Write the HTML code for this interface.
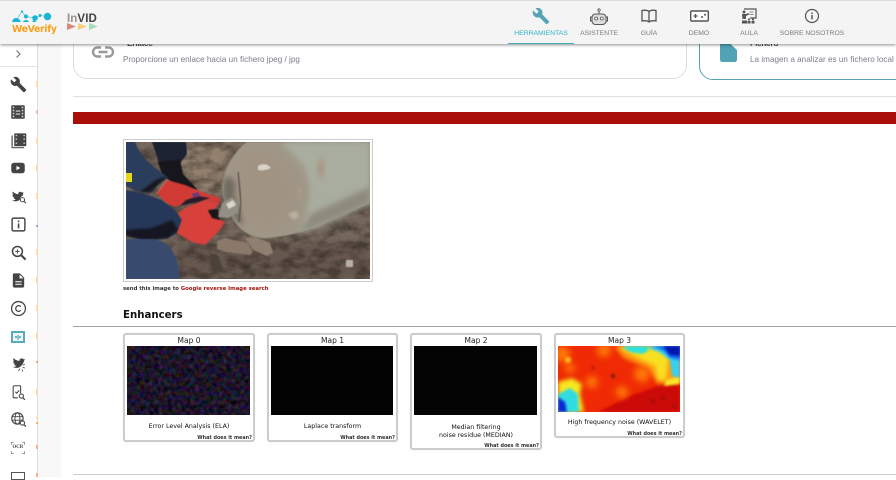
<!DOCTYPE html>
<html><head><meta charset="utf-8"><style>
html,body{margin:0;padding:0;background:#fff}
body{width:896px;height:477px;position:relative;overflow:hidden;font-family:"Liberation Sans",sans-serif}
.a{position:absolute}
.t{position:absolute;white-space:nowrap}
.nav{position:absolute;top:30px;font-size:6.8px;color:#7a7a7a;text-align:center;transform:translateX(-50%);white-space:nowrap}
.card{position:absolute;box-sizing:border-box;border:2px solid #ccc;border-radius:3px;background:#fff;box-shadow:0 0 1px #ddd}
.mt{position:absolute;left:0;right:0;top:1px;text-align:center;font:7.5px "DejaVu Sans",sans-serif;color:#222}
.cap{position:absolute;left:0;right:0;text-align:center;font:6.3px/8.5px "DejaVu Sans",sans-serif;color:#111}
.wm{position:absolute;right:1px;font:bold 4.900px "DejaVu Sans",sans-serif;color:#333;white-space:nowrap}
.ic{position:absolute;left:9.500px;width:17px;height:17px}
.o{position:absolute;left:36px;width:1.500px;height:6px;background:#fbd9a8}
.sub{font-size:8.100px;line-height:1;color:#7d7a86;letter-spacing:.03px}
</style></head><body>

<!-- sidebar -->
<div class="a" style="left:38px;top:44px;width:23px;height:433px;background:#f8f8f8"></div>
<div class="a" style="left:37px;top:44px;width:1px;height:433px;background:#ddd"></div>
<div class="a" style="left:0;top:66px;width:37px;height:1px;background:#e2e2e2"></div>
<svg class="a" style="left:13px;top:49px" width="10" height="10" viewBox="0 0 10 10"><path d="M3.500 1.500 7 5 3.500 8.500" fill="none" stroke="#777" stroke-width="1.200"/></svg>

<svg class="ic" style="top:76px" viewBox="0 0 24 24"><path fill="#444" d="M22.700 19l-9.100-9.100c.9-2.300.4-5-1.500-6.900-2-2-5-2.400-7.400-1.300L9 6 6 9 1.600 4.700C.4 7.100.9 10.100 2.900 12.100c1.900 1.900 4.600 2.400 6.900 1.500l9.100 9.100c.4.400 1 .4 1.400 0l2.300-2.300c.5-.4.500-1.100.1-1.400z"/></svg>
<svg class="ic" style="top:103px;left:9px;width:18px;height:18px" viewBox="0 0 24 24"><rect x="3" y="3" width="18" height="18" rx="1" fill="#444"/><g fill="#ddd"><rect x="5" y="5" width="2" height="2"/><rect x="5" y="9" width="2" height="2"/><rect x="5" y="13" width="2" height="2"/><rect x="5" y="17" width="2" height="2"/><rect x="17" y="5" width="2" height="2"/><rect x="17" y="9" width="2" height="2"/><rect x="17" y="13" width="2" height="2"/><rect x="17" y="17" width="2" height="2"/><rect x="9" y="10" width="6" height="1.500"/><rect x="9" y="14" width="6" height="1.500"/></g></svg>
<svg class="ic" style="top:132px" viewBox="0 0 24 24"><path fill="#666" d="M2 5h2v16h16v2H2z"/><rect x="6" y="2" width="17" height="18" rx="1" fill="#444"/><g fill="#ccc"><rect x="8" y="4" width="2" height="2"/><rect x="8" y="9" width="2" height="2"/><rect x="8" y="15" width="2" height="2"/><rect x="19" y="4" width="2" height="2"/><rect x="19" y="9" width="2" height="2"/><rect x="19" y="15" width="2" height="2"/></g></svg>
<svg class="ic" style="top:159px;left:9px;width:18px;height:18px" viewBox="0 0 24 24"><rect x="3" y="5" width="18" height="14" rx="3.500" fill="#444"/><path d="M10 9v6l5-3z" fill="#fff"/></svg>
<svg class="ic" style="top:187.500px" viewBox="0 0 24 24"><path fill="#444" d="M19 6c-.8.400-1.500.5-2 .5-1-1.200-2.500-1.500-3.800-.8-1.200.7-1.700 1.900-1.500 3.100C8.500 8.700 6 7.200 4 5c-1 1.800-.5 3.700 1 5-.6 0-1.200-.1-1.700-.4 0 1.900 1.300 3.300 3 3.800-.5.100-1 .1-1.500 0 .5 1.500 1.800 2.400 3.400 2.500C7 17 5 17.500 3 17.300c4 2.500 9 1.700 11-1 .5-3 1.500-4.500 3.500-5 .5-1 1-2 1.500-5.300z"/><circle cx="17.500" cy="16.500" r="3" fill="none" stroke="#444" stroke-width="1.400"/><path d="M19.700 18.700 22.500 21.500" stroke="#444" stroke-width="1.500"/></svg>
<svg class="ic" style="top:215.500px" viewBox="0 0 24 24"><rect x="3" y="3" width="18" height="18" rx="2" fill="none" stroke="#444" stroke-width="2"/><rect x="11" y="6.500" width="2.200" height="2.200" fill="#444"/><rect x="11" y="10.500" width="2.200" height="7" fill="#444"/></svg>
<svg class="ic" style="top:243.500px" viewBox="0 0 24 24"><circle cx="10.500" cy="10.500" r="7" fill="none" stroke="#444" stroke-width="2.200"/><path d="M15.500 15.500 22 22" stroke="#444" stroke-width="3"/><path d="M7.500 10.500h6M10.500 7.500v6" stroke="#555" stroke-width="1.500"/></svg>
<svg class="ic" style="top:271.500px" viewBox="0 0 24 24"><path fill="#444" d="M6 2h8l6 6v12c0 1.100-.9 2-2 2H6c-1.100 0-2-.9-2-2V4c0-1.100.9-2 2-2z"/><path fill="#fff" d="M13.500 3.500V9H19zM7.500 13h9v1.500h-9zM7.500 16.500h9v1.500h-9z"/></svg>
<svg class="ic" style="top:299.500px" viewBox="0 0 24 24"><circle cx="12" cy="12" r="9.800" fill="none" stroke="#444" stroke-width="1.800"/><path d="M15.200 9.500a4 4 0 1 0 0 5" fill="none" stroke="#444" stroke-width="1.800"/></svg>
<div class="a" style="left:11px;top:331px;width:14px;height:12px;box-sizing:border-box;border:2px solid #5aaab9;background:#eef6f8"></div>
<div class="a" style="left:15px;top:336px;width:6px;height:2px;background:#6fb4c4"></div>
<div class="a" style="left:17px;top:334.500px;width:2px;height:5px;background:#8cc4d0"></div>
<svg class="ic" style="top:355.500px" viewBox="0 0 24 24"><path fill="#444" d="M21 4c-.8.400-1.500.5-2 .5-1-1.200-2.800-1.500-4-.8-1.200.7-1.800 1.900-1.600 3.100C9.500 6.700 7 5.200 5 3c-1 1.800-.5 3.700 1 5-.6 0-1.200-.1-1.700-.4 0 1.900 1.300 3.300 3 3.800-.5.100-1 .1-1.500 0 .5 1.500 1.800 2.400 3.400 2.500C8 15 6 15.500 4 15.300c6 3.500 12 .7 15-6 .5-1 1-3 2-5.300z"/><path d="M14 18l-2 3M18 16l3 1M18 13l3-1M17 19l1 3" stroke="#555" stroke-width="1.300"/></svg>
<svg class="ic" style="top:383.500px" viewBox="0 0 24 24"><path d="M15 13V3.500a1 1 0 0 0-1-1H6.500a2 2 0 0 0-2 2V18a1.500 1.500 0 0 0 1.500 1.500h5" fill="none" stroke="#444" stroke-width="1.500"/><path d="M7.500 11l2 2 3.500-4" fill="none" stroke="#444" stroke-width="1.500"/><circle cx="16" cy="17" r="3" fill="none" stroke="#444" stroke-width="1.500"/><path d="M18 19.300 21 22.300" stroke="#444" stroke-width="1.700"/></svg>
<svg class="ic" style="top:410.500px" viewBox="0 0 24 24"><circle cx="10.500" cy="10.500" r="8" fill="none" stroke="#444" stroke-width="1.600"/><ellipse cx="10.500" cy="10.500" rx="3.500" ry="8" fill="none" stroke="#444" stroke-width="1.300"/><path d="M2.500 8h16M2.500 13h16" stroke="#444" stroke-width="1.300"/><circle cx="17.500" cy="17" r="3" fill="#fff" stroke="#444" stroke-width="1.500"/><path d="M19.700 19.200 22.500 22" stroke="#444" stroke-width="1.700"/></svg>
<svg class="a" style="left:11px;top:442px" width="14" height="12" viewBox="0 0 14 12"><path d="M0 3V0h3M11 0h3v3M14 9v3h-3M3 12H0V9" fill="none" stroke="#555" stroke-width="1"/></svg>
<div class="t" style="left:12.500px;top:445px;font:bold 4.300px 'DejaVu Serif',serif;color:#555">OCR</div>
<div class="a" style="left:11px;top:472px;width:14px;height:8px;box-sizing:border-box;border:1.300px solid #555"></div>

<div class="o" style="top:81px"></div><div class="o" style="top:110px;height:4px;background:#f0c0b0"></div><div class="o" style="top:138px"></div><div class="o" style="top:165px"></div><div class="o" style="top:193px"></div><div class="o" style="top:225px;height:2px;background:#c090d8"></div><div class="o" style="top:249px"></div><div class="o" style="top:277px"></div><div class="o" style="top:305px"></div><div class="o" style="top:333px"></div><div class="o" style="top:361px;height:2px;background:#f3a070"></div><div class="o" style="top:389px"></div><div class="o" style="top:417px;height:2px"></div><div class="o" style="top:422px;height:2px;background:#f5b060"></div><div class="o" style="top:445px;height:4px;background:#f7b090"></div><div class="o" style="top:473px;height:4px;background:#f7b090"></div>

<!-- cards -->
<div class="a" style="left:73px;top:30px;width:614px;height:49px;box-sizing:border-box;border:1px solid #ddd;border-radius:14px;background:#fff"></div>
<div class="t" style="left:127px;top:38px;font:8.500px 'Liberation Sans',sans-serif;color:#111">Enlace</div>
<div class="t sub" style="left:123px;top:56px">Proporcione un enlace hacia un fichero jpeg / jpg</div>
<svg class="a" style="left:91px;top:40px" width="24" height="24" viewBox="0 0 24 24"><path fill="none" stroke="#9a9a9a" stroke-width="2.400" d="M10 7.500H6.500a4.500 4.500 0 0 0 0 9H10M14 7.500h3.500a4.500 4.500 0 0 1 0 9H14M7.500 12h9"/></svg>
<div class="a" style="left:699px;top:30px;width:240px;height:50px;box-sizing:border-box;border:1px solid #58a3b3;border-radius:14px;background:#fff"></div>
<div class="t" style="left:750px;top:38px;font:8.500px 'Liberation Sans',sans-serif;color:#111">Fichero</div>
<svg class="a" style="left:720px;top:38px" width="17" height="24" viewBox="0 0 17 24"><path fill="#52a3b5" d="M2 0H4L17 12V21.500Q17 24 14.500 24H2.500Q0 24 0 21.500V2Q0 0 2 0z"/></svg>
<div class="t sub" style="left:750px;top:56px">La imagen a analizar es un fichero local</div>

<div class="a" style="left:73px;top:96px;width:823px;height:1px;background:#e0e0e0"></div>
<div class="a" style="left:73px;top:112px;width:823px;height:12px;background:#a90f08"></div>

<!-- top bar -->
<div class="a" style="left:0;top:0;width:896px;height:44px;background:#f4f4f4;border-top:1px solid #ddd;box-sizing:border-box;box-shadow:0 1px 3px rgba(0,0,0,.45)"></div>

<!-- logos -->
<svg class="a" style="left:10px;top:8px" width="45" height="28" viewBox="0 0 45 28"><g fill="#18b6d4"><circle cx="37.500" cy="8.500" r="3.700"/><circle cx="30" cy="7.500" r="1.500"/><circle cx="25" cy="10" r="2.800"/><circle cx="16" cy="8.500" r="2"/><circle cx="12" cy="3.500" r="1.100"/><path d="M2 14c.5-3 3-5 6-3.500 1.500.8 2.400 2 2.600 3.500z"/><path d="M13 14c.5-1.500 1.500-2 3-2s2.400.8 2.800 2z"/><path d="M22 14l2-2.500 2.500 2.500z"/></g><path d="M12 3.500 16 8.500 25 10 30 7.500 37.500 8.500M12 3.500 7 11" stroke="#18b6d4" stroke-width=".6" fill="none"/></svg>
<div class="t" style="left:12px;top:23.500px;font:bold 9.300px 'DejaVu Sans',sans-serif;color:#f9a01b;letter-spacing:-.3px">WeVerify</div>
<div class="t" style="left:67px;top:12.500px;font:bold 11.500px 'Liberation Sans',sans-serif;color:#9a8f8f;letter-spacing:.1px">In<span style="color:#444">VID</span></div>
<svg class="a" style="left:67px;top:23px" width="32" height="8" viewBox="0 0 32 8"><path d="M0 0 9 3.500 0 7z" fill="#d98a80"/><path d="M11 0 20 3.500 11 7z" fill="#f3cf7e"/><path d="M22 0 31 3.500 22 7z" fill="#a5dcb9"/></svg>

<!-- nav -->
<svg class="a" style="left:532px;top:7px" width="18" height="18" viewBox="0 0 24 24"><path fill="#54a4b6" d="M22.700 19l-9.100-9.100c.9-2.300.4-5-1.500-6.900-2-2-5-2.400-7.400-1.300L9 6 6 9 1.600 4.700C.4 7.100.9 10.100 2.900 12.100c1.900 1.900 4.600 2.400 6.900 1.500l9.100 9.100c.4.400 1 .4 1.400 0l2.300-2.300c.5-.4.500-1.100.1-1.400z"/></svg>
<svg class="a" style="left:589px;top:8px" width="20" height="18" viewBox="0 0 20 18"><rect x="3" y="6" width="14" height="10.500" rx="3.500" fill="#ddd" stroke="#555" stroke-width="1"/><path d="M3 9H1.500v4H3M17 9h1.500v4H17M10 6V3" stroke="#555" fill="none"/><circle cx="10" cy="2" r="1.200" fill="none" stroke="#555" stroke-width=".8"/><circle cx="7.200" cy="10.500" r="1.500" fill="#fff" stroke="#555" stroke-width=".8"/><circle cx="12.800" cy="10.500" r="1.500" fill="#fff" stroke="#555" stroke-width=".8"/></svg>
<svg class="a" style="left:641px;top:9px" width="16" height="14" viewBox="0 0 16 14"><path d="M8 2.500C6.500 1.300 3.500 1 1 1.500v10.500c2.500-.5 5.500-.2 7 1 1.500-1.200 4.500-1.500 7-1V1.500C12.500 1 9.500 1.300 8 2.500zM8 2.500V13" fill="none" stroke="#555" stroke-width="1.300"/></svg>
<svg class="a" style="left:690px;top:10px" width="19" height="12" viewBox="0 0 19 12"><rect x=".7" y="1" width="17.600" height="10" rx="1" fill="#fff" stroke="#555" stroke-width="1.400"/><path d="M3.500 6h4M5.500 4v4" stroke="#555" stroke-width="1.300"/><circle cx="12" cy="7" r="1" fill="#555"/><circle cx="15" cy="4.700" r="1" fill="#555"/></svg>
<svg class="a" style="left:741px;top:8px" width="16" height="16" viewBox="0 0 16 16"><path d="M3 1h12v9H9" fill="none" stroke="#555" stroke-width="1.200"/><circle cx="3" cy="4" r="1.500" fill="#555"/><path d="M1 6h4l3-1v1.500L5 8v3H1.500z" fill="#555"/><rect x="8.500" y="3.500" width="4" height="1" fill="#888"/><rect x="8.500" y="6" width="4" height="1" fill="#888"/><g fill="#555"><circle cx="8" cy="11.500" r="1.100"/><circle cx="12" cy="11.500" r="1.100"/><rect x="1" y="12.500" width="5" height="3"/><rect x="6.500" y="13" width="3" height="2.500"/><rect x="10.500" y="13" width="3" height="2.500"/></g></svg>
<svg class="a" style="left:804px;top:8px" width="16" height="16" viewBox="0 0 16 16"><circle cx="8" cy="8" r="6.500" fill="none" stroke="#555" stroke-width="1.200"/><rect x="7.300" y="7" width="1.500" height="4.300" fill="#555"/><rect x="7.300" y="4.500" width="1.500" height="1.500" fill="#555"/></svg>

<div class="nav" style="left:541px;color:#2ab3c6">HERRAMIENTAS</div>
<div class="nav" style="left:599px">ASISTENTE</div>
<div class="nav" style="left:649px">GUÍA</div>
<div class="nav" style="left:699px">DEMO</div>
<div class="nav" style="left:749px">AULA</div>
<div class="nav" style="left:812px">SOBRE NOSOTROS</div>
<div class="a" style="left:508px;top:42.500px;width:66px;height:1.500px;background:#3fb0b9"></div>

<!-- main image -->
<div class="a" style="left:123px;top:139px;width:250px;height:143px;box-sizing:border-box;border:1.500px solid #ccc;background:#fff"></div>
<svg class="a" style="left:126px;top:142px" width="244" height="137" viewBox="0 0 244 137">
<defs>
<filter id="b05"><feGaussianBlur stdDeviation=".6"/></filter>
<filter id="b1"><feGaussianBlur stdDeviation="1"/></filter>
<filter id="b3" x="-30%" y="-30%" width="160%" height="160%"><feGaussianBlur stdDeviation="3"/></filter>
<filter id="b6" x="-30%" y="-30%" width="160%" height="160%"><feGaussianBlur stdDeviation="7"/></filter>
<filter id="n" x="0" y="0" width="100%" height="100%" color-interpolation-filters="sRGB"><feTurbulence type="fractalNoise" baseFrequency=".07 .11" numOctaves="4" seed="11"/><feColorMatrix values="0 0 0 0 .14 0 0 0 0 .11 0 0 0 0 .09 1.500 0 0 0 -.55"/></filter>
<clipPath id="c"><rect width="244" height="137"/></clipPath>
</defs>
<g clip-path="url(#c)">
<rect width="244" height="137" fill="#75675c"/>
<path d="M30 0h90c-15 10-25 30-25 55L70 50z" fill="#94826f" filter="url(#b6)"/>
<path d="M50 100h194v37H50z" fill="#66584f" filter="url(#b3)"/>
<rect width="244" height="137" filter="url(#n)" opacity=".8"/>
<!-- barrel -->
<path d="M121 0H244V61L206 78C190 86 168 94 141 96C125 97 112 88 104 72C96 58 94 44 98 34C102 20 110 8 121 0z" fill="#a09788" filter="url(#b05)"/>
<path d="M155 0H244V61L206 78C195 84 184 88 172 92C184 70 188 40 176 22z" fill="#a8ad9f" filter="url(#b3)"/>
<path d="M185 72 244 45V61L206 78 172 92z" fill="#8e8a7c" filter="url(#b3)"/>
<path d="M122 6C140 8 160 18 168 44C168 60 164 76 150 86C135 90 125 86 118 76C108 60 106 30 122 6z" fill="#a19382" filter="url(#b6)"/>
<path d="M98 36C106 32 112 40 108 52C112 62 114 72 118 84C108 78 100 66 97 52z" fill="#6f695e" filter="url(#b3)"/>
<path d="M112 30l3 30-2 20" stroke="#5e5548" stroke-width="1.500" fill="none" filter="url(#b05)"/>
<path d="M132 24c5-3 10-2 13 2-4 2-9 3-13 2z" fill="#d8d3c6" filter="url(#b05)"/>
<path d="M162 72l8-3 3 5-5 4z" fill="#bdb19c" filter="url(#b1)"/>
<path d="M192 20l6-4-1 18-5 2z" fill="#a8917c" filter="url(#b3)"/>
<path d="M172 44c3-1 5 8 3 14l-3-2z" fill="#a89884" filter="url(#b05)"/>
<!-- stones -->
<path d="M91 99l8-3 23 5 5 9-3 3-24-3-9-3z" fill="#8a786a" filter="url(#b05)"/>
<path d="M119 96l11-1 14 6 3 10-6 3-14-6z" fill="#8e7f70" filter="url(#b05)"/>
<path d="M84 111l8 2 6 16-10 2-4-8z" fill="#4e433b" filter="url(#b05)"/>
<rect x="220" y="118" width="7" height="7" fill="#b8b2a6" filter="url(#b05)"/>
<!-- leg and boot -->
<path d="M26 0H60L61 12 52 24 34 24z" fill="#1f2433" filter="url(#b05)"/>
<path d="M32 20 54 18 57 32 72 48 50 44 36 32z" fill="#17161a" filter="url(#b05)"/>
<!-- arm and jacket -->
<path d="M0 0H9C12 10 24 24 42 35L31 43 26 50 16 50 8 48 0 44z" fill="#2c3c5c" filter="url(#b05)"/>
<path d="M42 34 24 50 14 50 30 38z" fill="#14161d" filter="url(#b1)"/>
<path d="M0 48 16 51 36 58 49 68 56 78 51 91 42 96 19 98 0 93z" fill="#26375a" filter="url(#b05)"/>
<path d="M0 88 26 86 46 78 52 88 42 96 19 99 0 94z" fill="#141821" filter="url(#b1)"/>
<path d="M0 97H26C44 99 52 112 54 137H0z" fill="#374b6e" filter="url(#b05)"/>
<!-- cuff -->
<path d="M31 51 41 38 44 40 34 51z" fill="#d8c0b0" filter="url(#b05)"/>
<!-- gloves -->
<path d="M31 51 41 38 59 43 76 50 94 56 94 61 79 58 66 60 54 63 49 65 39 60z" fill="#d23a36" filter="url(#b05)"/>
<path d="M52 71 61 65 79 58 94 61 89 66 82 70 89 76 99 80 94 88 79 103 66 100 51 91 56 78z" fill="#d7403a" filter="url(#b05)"/>
<path d="M54 64 60 58 72 54 84 56 72 60 62 62z" fill="#2a1e2c" filter="url(#b05)"/>
<path d="M66 52l6-2 2 4-6 2z" fill="#6a3a78"/>
<path d="M82 68 92 67 94 78 86 76z" fill="#1a1614" filter="url(#b05)"/>
<!-- metal nose -->
<path d="M92 75 96 61 106 55 112 61 112 71 102 76z" fill="#938f86" filter="url(#b05)"/>
<path d="M100 62l7-4 3 5-7 4z" fill="#d8d6cc" filter="url(#b05)"/>
<rect x="0" y="31" width="6" height="9" fill="#e6d71e"/>
</g></svg>
<div class="t" style="left:123px;top:285.500px;font:bold 5.330px 'DejaVu Sans',sans-serif;color:#333">send this image to <span style="color:#a6110c">Google reverse Image search</span></div>

<!-- Enhancers -->
<div class="t" style="left:123px;top:310px;font:bold 10.200px 'DejaVu Sans',sans-serif;color:#111">Enhancers</div>
<div class="a" style="left:73px;top:326px;width:823px;height:1px;background:#a0a0a0"></div>

<div class="card" style="left:123px;top:333px;width:132px;height:109px">
<div class="mt">Map 0</div>
<svg class="a" style="left:2px;top:11px" width="123" height="69" viewBox="0 0 123 69"><defs><filter id="e" x="0" y="0" width="100%" height="100%" color-interpolation-filters="sRGB"><feTurbulence type="fractalNoise" baseFrequency=".22" numOctaves="3" seed="8"/><feColorMatrix values=".4 0 0 0 -.09 0 .32 0 0 -.08 0 0 .5 0 -.09 0 0 0 0 1"/></filter></defs><rect width="123" height="69" filter="url(#e)"/></svg>
<div class="cap" style="top:88px">Error Level Analysis (ELA)</div>
<div class="wm" style="top:100px">What does it mean?</div>
</div>

<div class="card" style="left:267px;top:333px;width:131px;height:109px">
<div class="mt">Map 1</div>
<div class="a" style="left:2px;top:11px;width:122px;height:69px;background:#030303"></div>
<div class="cap" style="top:88px">Laplace transform</div>
<div class="wm" style="top:100px">What does it mean?</div>
</div>

<div class="card" style="left:410px;top:333px;width:132px;height:117px">
<div class="mt">Map 2</div>
<div class="a" style="left:2px;top:11px;width:123px;height:69px;background:#040404"></div>
<div class="cap" style="top:88.500px">Median filtering<br>noise residue (MEDIAN)</div>
<div class="wm" style="top:108px">What does it mean?</div>
</div>

<div class="card" style="left:554px;top:333px;width:131px;height:105px">
<div class="mt">Map 3</div>
<svg class="a" style="left:2px;top:11px" width="122" height="66" viewBox="0 0 122 66"><defs><filter id="h0" x="-30%" y="-30%" width="160%" height="160%" color-interpolation-filters="sRGB"><feGaussianBlur stdDeviation="3.500"/></filter><filter id="h1" x="-30%" y="-30%" width="160%" height="160%" color-interpolation-filters="sRGB"><feGaussianBlur stdDeviation="2"/></filter><filter id="h2" x="-30%" y="-30%" width="160%" height="160%" color-interpolation-filters="sRGB"><feGaussianBlur stdDeviation="1.200"/></filter><clipPath id="hc"><rect width="122" height="66"/></clipPath></defs><g clip-path="url(#hc)">
<rect width="122" height="66" fill="#f02a04"/>
<path d="M72 50 122 32V66H40L60 56z" fill="#cc0a08" filter="url(#h2)"/>
<g filter="url(#h0)" fill="#ff7808"><circle cx="4" cy="8" r="8"/><circle cx="12" cy="22" r="5"/><circle cx="34" cy="36" r="6"/><circle cx="46" cy="4" r="7"/><circle cx="64" cy="46" r="6"/><circle cx="84" cy="28" r="8"/></g>
<circle cx="10" cy="14" r="3" fill="#ffc020" filter="url(#h2)"/>
<path d="M56 0H122V36L100 38 90 22 66 12z" fill="#ff9a10" filter="url(#h1)"/>
<path d="M60 0 112 0 108 34 100 34 97 20 78 11z" fill="#f8e020" filter="url(#h1)"/>
<path d="M108 34 122 30V38L106 40z" fill="#f8e828" filter="url(#h2)"/>
<path d="M63 0H90L90 5 84 8 72 6z" fill="#2ce0e0" filter="url(#h2)"/>
<path d="M90 0H122V32L114 30 112 14 101 6 92 3z" fill="#38d0f0" filter="url(#h2)"/>
<path d="M94 0H122V14L112 12 106 5z" fill="#1070f0" filter="url(#h2)"/>
<path d="M105 0H122V10L112 9z" fill="#0614b0" filter="url(#h2)"/>
<path d="M0 36 14 32 24 38 22 48 26 66H0z" fill="#f6e820" filter="url(#h1)"/>
<path d="M0 48 12 42 20 48 21 66H0z" fill="#30dce0" filter="url(#h2)"/>
<path d="M0 51 7 56 9 66H0z" fill="#0a28d8" filter="url(#h2)"/>
<g fill="#6e1410" filter="url(#h2)"><circle cx="55" cy="30" r="2"/><circle cx="35" cy="22" r="1.200"/><circle cx="95" cy="55" r="1.500"/><circle cx="105" cy="52" r="1.300"/><circle cx="116" cy="60" r="1.300"/></g>
</g></svg>
<div class="cap" style="top:84px">High frequency noise (WAVELET)</div>
<div class="wm" style="top:96px">What does it mean?</div>
</div>

<div class="a" style="left:73px;top:474px;width:823px;height:1px;background:#ccc"></div>
</body></html>
